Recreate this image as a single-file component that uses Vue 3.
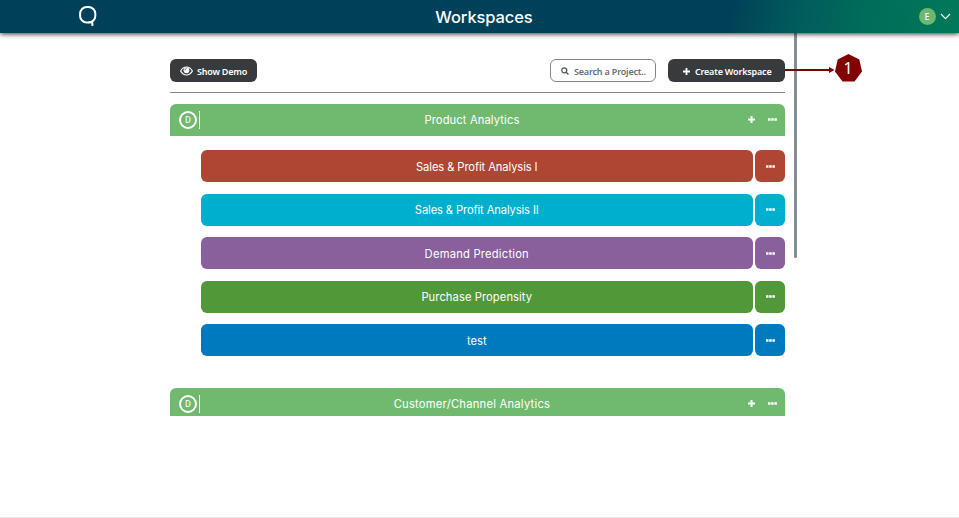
<script setup>
const projects = [
  { name: 'Sales & Profit Analysis I', tone: 'rust' },
  { name: 'Sales & Profit Analysis II', tone: 'cyan' },
  { name: 'Demand Prediction', tone: 'purple' },
  { name: 'Purchase Propensity', tone: 'green' },
  { name: 'test', tone: 'blue' },
]
const sections = [
  { name: 'Product Analytics', tone: 'first', projects },
  { name: 'Customer/Channel Analytics', tone: 'last', projects: [] },
]
</script>

<template>
  <div class="page">
    <header class="topbar">
      <svg class="logo" viewBox="0 0 18 21">
        <rect x="1.100" y="1.100" width="15.200" height="15.400" rx="6.600" fill="none" stroke="#fff" stroke-width="2" />
        <path d="M9.500 16.300h3.700l.3 3.600" fill="none" stroke="#fff" stroke-width="2" />
      </svg>
      <h1>Workspaces</h1>
      <div class="account">
        <span class="avatar">E</span>
        <svg width="11" height="7" viewBox="0 0 11 7"><path d="M1 1l4.500 4.600L10 1" fill="none" stroke="#e6fff6" stroke-width="1.200" /></svg>
      </div>
    </header>
    <main class="body">
      <div class="content">
        <div class="toolbar">
          <button class="btn demo">
            <svg width="13" height="10" viewBox="0 0 13 10">
              <path d="M.6 5Q3 1 6.500 1T12.400 5Q10 9 6.500 9T.6 5z" fill="none" stroke="#fff" stroke-width="1.200" />
              <circle cx="6.500" cy="4.300" r="2.900" fill="#fff" />
              <path d="M4.900 4.400Q4.900 2.700 6.500 2.700" fill="none" stroke="#373b3e" stroke-width=".7" />
            </svg>
            <span>Show Demo</span>
          </button>
          <div class="search">
            <svg width="8" height="8" viewBox="0 0 8 8"><circle cx="3.300" cy="3.300" r="2.500" fill="none" stroke="#4c5566" stroke-width="1.200" /><path d="M5.200 5.200l2.300 2.300" stroke="#4c5566" stroke-width="1.300" /></svg>
            <span>Search a Project..</span>
          </div>
          <button class="btn create">
            <svg width="7" height="7" viewBox="0 0 7 7"><path d="M3.500 0v7M0 3.500h7" stroke="#fff" stroke-width="1.800" /></svg>
            <span>Create Workspace</span>
            <span class="callout">
              <svg width="78" height="28" viewBox="0 0 78 28">
                <path d="M0 16h46" stroke="#800000" stroke-width="1.800" />
                <path d="M44 13l5.500 3-5.500 3z" fill="#800000" />
                <path d="M63.500 0L74.300 5.400 77 17.400 69.500 27.600H57.500L50 17.400 52.700 5.400z" fill="#800000" />
              </svg>
              <b>1</b>
            </span>
          </button>
        </div>
        <section v-for="s in sections" :key="s.name" :class="['group', s.tone]">
          <div class="group-head">
            <span class="badge">D</span>
            <i class="bar"></i>
            <span class="title">{{ s.name }}</span>
            <svg class="plus" width="7" height="7" viewBox="0 0 7 7"><path d="M3.500 0v7M0 3.500h7" stroke="#fff" stroke-width="2" /></svg>
            <svg class="dots" width="9" height="3" viewBox="0 0 9 3"><path d="M0 .3h2.500v2.400H0zM3.200 .3h2.500v2.400H3.200zM6.400 .3h2.500v2.400H6.400z" fill="#fff" /></svg>
          </div>
          <div v-if="s.projects.length" class="projects">
            <div v-for="p in s.projects" :key="p.name" :class="['row', p.tone]">
              <div class="name"><span>{{ p.name }}</span></div>
              <div class="more">
                <svg width="9" height="3" viewBox="0 0 9 3"><path d="M0 .3h2.500v2.400H0zM3.200 .3h2.500v2.400H3.200zM6.400 .3h2.500v2.400H6.400z" fill="#fff" /></svg>
              </div>
            </div>
          </div>
        </section>
      </div>
      <div class="scroll-thumb"></div>
    </main>
  </div>
</template>

<style>
body { margin: 0; background: #fff; overflow: hidden; }
</style>

<style scoped>
* { box-sizing: border-box; }
svg { display: block; flex: none; }
.page { height: 518px; display: flex; flex-direction: column; border-bottom: 1px solid #e8e8e8; overflow: hidden; font-family: Inter, "Liberation Sans", sans-serif; }
.topbar { height: 33px; flex: none; display: grid; grid-template-columns: 1fr auto 1fr; align-items: center; color: #fff; z-index: 1; background: linear-gradient(100deg, #004159 0%, #004159 76%, #005c5b 83%, #006c5a 90%, #007a58 100%); box-shadow: 0 1px 5px rgba(20, 10, 15, .85); }
.logo { width: 18px; height: 21px; margin: 0 0 1px 78.600px; }
h1 { margin: 1px 0 0 9px; font-size: 16.500px; font-weight: 500; line-height: 24px; letter-spacing: -.1px; }
.account { display: flex; justify-content: flex-end; align-items: center; gap: 4px; padding-right: 8.500px; }
.avatar { width: 17px; height: 17px; border-radius: 50%; background: #6db76f; display: grid; place-items: center; font: 500 9px "Noto Sans", sans-serif; }
.body { flex: 1; display: flex; align-items: flex-start; }
.content { width: 614.600px; margin-left: 170.400px; padding-top: 26.400px; }
.toolbar { display: flex; height: 33.500px; align-items: flex-start; border-bottom: 1.500px solid #8583a0; }
.btn, .search { height: 23px; border-radius: 6px; display: flex; align-items: center; font: 600 9px "Noto Sans", sans-serif; letter-spacing: -.18px; white-space: nowrap; }
.btn { border: 0; background: #373b3e; color: #fff; position: relative; }
.demo { width: 86.500px; padding: 1px 0 0 10px; gap: 3.500px; }
.search { width: 106px; margin-left: auto; margin-right: 12.500px; padding: 1px 0 0 10px; gap: 5px; border: 1px solid #858585; color: #686c72; }
.create { width: 116.500px; padding: 1px 0 0 14.400px; gap: 5px; }
.callout { position: absolute; left: 100%; top: -5.500px; width: 78px; height: 28px; letter-spacing: 0; }
.callout b { position: absolute; left: 50px; top: 0; width: 26px; text-align: center; font: 400 16px/28px "Noto Sans", sans-serif; }
.group.first { margin-top: 11.100px; }
.group-head { height: 32px; display: flex; align-items: center; background: #70ba70; border-radius: 6px 6px 0 0; color: #fff; padding: 0 8.300px 0 8.500px; }
.last .group-head { height: 28.400px; padding-top: 3px; }
.badge { width: 18px; height: 18px; border: 2px solid #fff; border-radius: 50%; display: grid; place-items: center; font: 500 8px/1 "Noto Sans", sans-serif; }
.bar { width: 1.300px; height: 18px; background: #fff; margin-left: 2px; }
.title { flex: 1; text-align: center; font-size: 11.200px; letter-spacing: .12px; padding: 1px 4px 0 0; }
.last .title { letter-spacing: .24px; }
.plus { margin-right: 13px; }
.projects { padding: 14.500px 0 31.900px 30.600px; display: grid; gap: 11.400px; }
.row { display: flex; gap: 2.500px; height: 32px; color: #fff; font-size: 11.200px; }
.name, .more { border-radius: 6px; display: grid; place-items: center; background: var(--tone); }
.name { width: 551.600px; padding-top: 1px; }
.more { width: 30px; }
.rust { --tone: #ae4633; letter-spacing: -.1px; }
.cyan { --tone: #00aece; letter-spacing: -.12px; }
.purple { --tone: #895f9c; letter-spacing: .22px; }
.green { --tone: #509838; letter-spacing: .08px; }
.blue { --tone: #007abe; }
.scroll-thumb { width: 3px; height: 225px; margin-left: 9px; background: #848e97; border-radius: 0 0 2px 2px; }
</style>
